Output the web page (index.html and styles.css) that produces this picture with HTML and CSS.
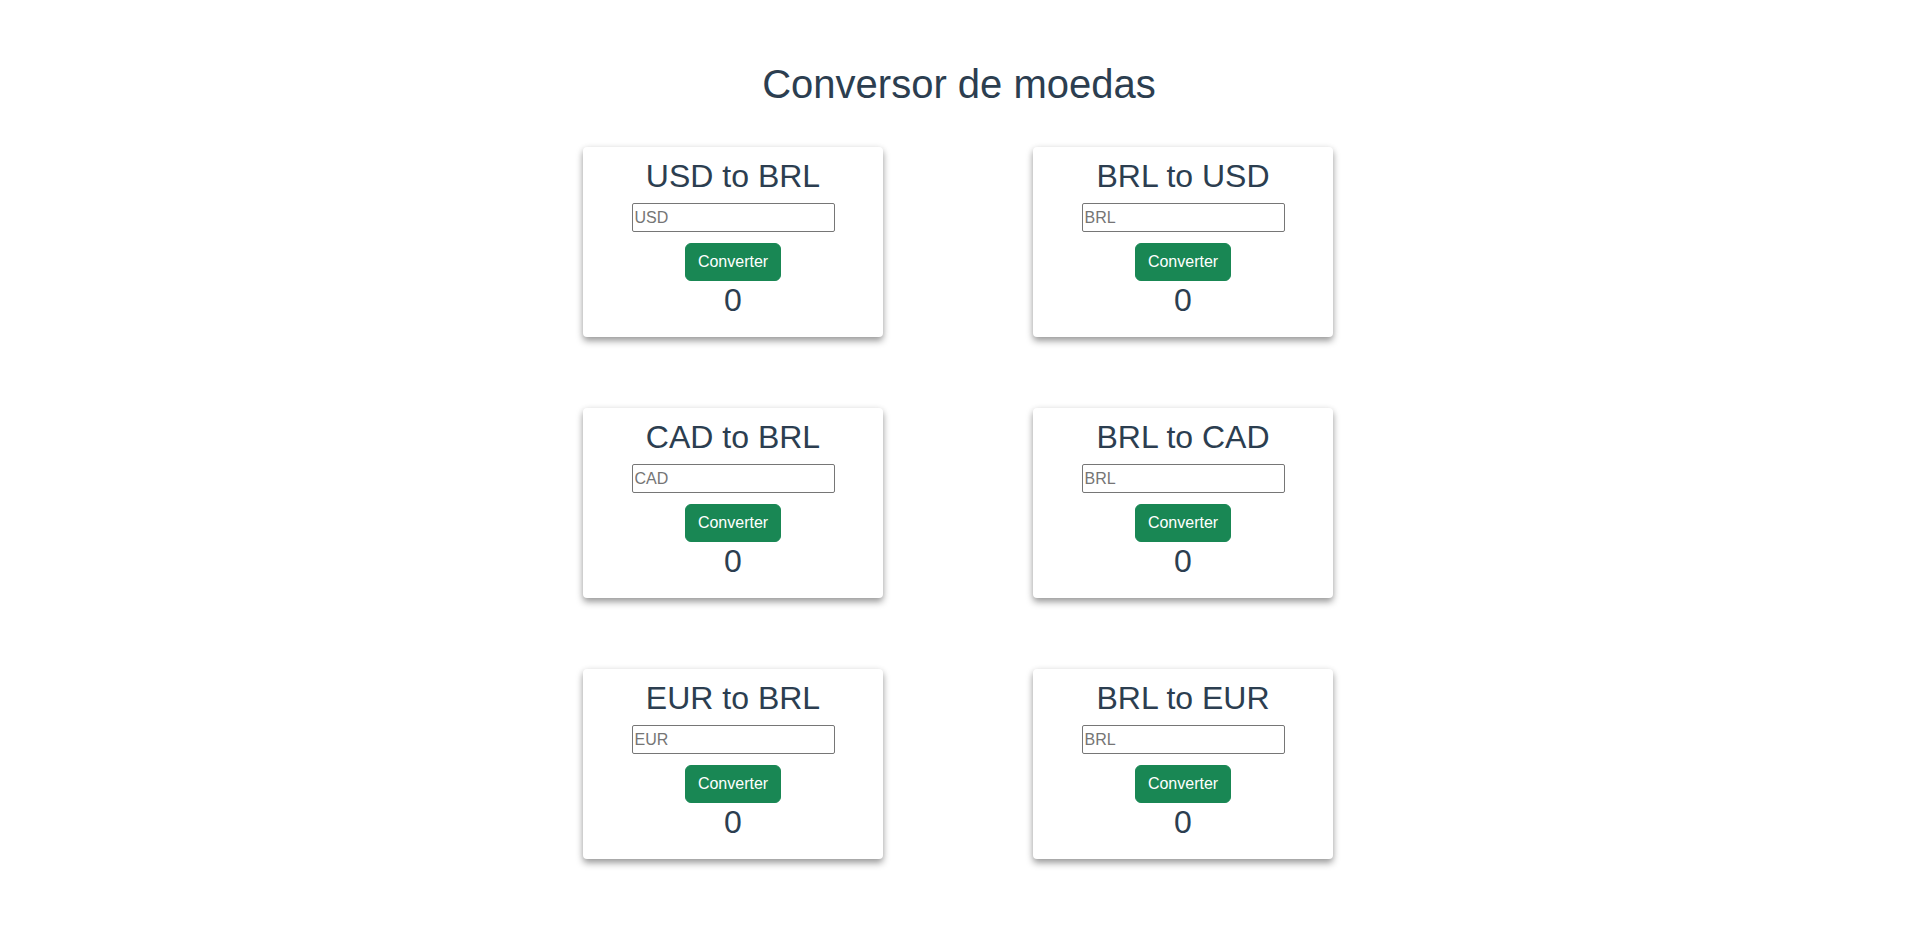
FILE: index.html
```html
<!DOCTYPE html>
<html lang="pt">
<head>
<meta charset="utf-8">
<title>Conversor de moedas</title>
<link rel="stylesheet" href="styles.css">
</head>
<body>
<div class="app">
  <h1 class="title">Conversor de moedas</h1>
  <div class="grid">
    <div class="card">
      <h2 class="card-title">USD to BRL</h2>
      <input class="field" type="text" placeholder="USD">
      <button class="btn">Converter</button>
      <h2 class="result">0</h2>
    </div>
    <div class="card">
      <h2 class="card-title">BRL to USD</h2>
      <input class="field" type="text" placeholder="BRL">
      <button class="btn">Converter</button>
      <h2 class="result">0</h2>
    </div>
    <div class="card">
      <h2 class="card-title">CAD to BRL</h2>
      <input class="field" type="text" placeholder="CAD">
      <button class="btn">Converter</button>
      <h2 class="result">0</h2>
    </div>
    <div class="card">
      <h2 class="card-title">BRL to CAD</h2>
      <input class="field" type="text" placeholder="BRL">
      <button class="btn">Converter</button>
      <h2 class="result">0</h2>
    </div>
    <div class="card">
      <h2 class="card-title">EUR to BRL</h2>
      <input class="field" type="text" placeholder="EUR">
      <button class="btn">Converter</button>
      <h2 class="result">0</h2>
    </div>
    <div class="card">
      <h2 class="card-title">BRL to EUR</h2>
      <input class="field" type="text" placeholder="BRL">
      <button class="btn">Converter</button>
      <h2 class="result">0</h2>
    </div>
  </div>
</div>
</body>
</html>
```

FILE: styles.css
```css
html, body {
  margin: 0;
  padding: 0;
  background: #ffffff;
}

.app {
  font-family: "Liberation Sans", Arial, Helvetica, sans-serif;
  color: #2c3e50;
  text-align: center;
  padding-top: 60px;
  padding-bottom: 48px;
}

.title {
  font-size: 40px;
  font-weight: 400;
  line-height: 1.2;
  margin: 0 0 39px 0;
}

.grid {
  display: grid;
  grid-template-columns: 300px 300px;
  column-gap: 150px;
  row-gap: 71px;
  justify-content: center;
  padding-right: 2px;
}

.card {
  display: flex;
  flex-direction: column;
  align-items: center;
  box-sizing: border-box;
  height: 190px;
  padding: 10px 10px;
  background: #fff;
  border-radius: 4px;
  box-shadow: 0 4px 7px rgba(0, 0, 0, 0.38), 0 0 6px rgba(0, 0, 0, 0.06);
}

.card-title,
.result {
  font-size: 32px;
  font-weight: 400;
  line-height: 1.2;
  margin: 0 0 8px 0;
}

.field {
  box-sizing: border-box;
  width: 203px;
  height: 29px;
  padding: 1px 2px;
  font-family: "Liberation Sans", Arial, sans-serif;
  font-size: 16px;
  color: #212529;
  border: 1px solid #767676;
  border-radius: 2px;
  outline: none;
}

.field::placeholder {
  color: #757575;
}

.btn {
  margin-top: 11px;
  box-sizing: border-box;
  height: 38px;
  padding: 6px 12px;
  font-family: "Liberation Sans", Arial, sans-serif;
  font-size: 16px;
  line-height: 24px;
  color: #fff;
  background: #198754;
  border: 1px solid #198754;
  border-radius: 6px;
}
```
